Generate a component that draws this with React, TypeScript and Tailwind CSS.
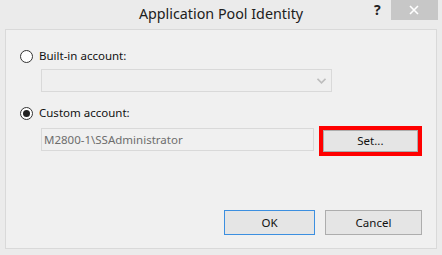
import React from "react";

function Radio({ checked }: { checked?: boolean }) {
  return (
    <div className="w-[13px] h-[13px] rounded-full border border-[#333333] bg-white flex items-center justify-center">
      {checked && <div className="w-[7px] h-[7px] rounded-full bg-[#222222]" />}
    </div>
  );
}

export default function App() {
  return (
    <div
      className="w-[442px] h-[255px] bg-[#ebebeb] flex flex-col text-[11.5px] text-[#111111]"
      style={{ fontFamily: '"Segoe UI", "Noto Sans", "Open Sans", sans-serif' }}
    >
      {/* Title bar */}
      <div className="h-[29px] flex items-start shrink-0">
        <div className="w-[72px]" />
        <div className="flex-1 flex justify-center pt-[4px]">
          <span className="text-[14.3px] leading-[20px] text-[#202020]">Application Pool Identity</span>
        </div>
        <div className="w-[72px] flex items-start">
          <span className="ml-[4px] mt-[1px] text-[14px] font-bold leading-[18px] text-[#222222]">?</span>
          <div className="ml-[10px] w-[47px] h-[20px] bg-[#c7c7c7] flex items-center justify-center">
            <svg width="10" height="10" viewBox="0 0 10 10">
              <path d="M1 1 L9 9 M9 1 L1 9" stroke="#ffffff" strokeWidth="1.6" />
            </svg>
          </div>
        </div>
      </div>

      {/* Panel */}
      <div className="flex-1 mx-[5px] mb-[6px] border border-[#d9d9d9] bg-[#f0f0f0] flex flex-col pl-[14px] pr-[14px] pb-[13px]">
        <div className="h-[16px] mt-[18px] flex items-center gap-[6px]">
          <Radio />
          <span className="leading-[16px]">Built-in account:</span>
        </div>
        <div className="mt-[5px] ml-[21px] w-[291px] h-[23px] border border-[#d9d9d9] bg-[#efefef] flex items-center justify-end pr-[5px]">
          <svg width="9" height="6" viewBox="0 0 9 6">
            <path d="M0.5 0.8 L4.5 4.8 L8.5 0.8" stroke="#bdbdbd" strokeWidth="1.6" fill="none" />
          </svg>
        </div>
        <div className="h-[16px] mt-[13px] flex items-center gap-[6px]">
          <Radio checked />
          <span className="leading-[16px]">Custom account:</span>
        </div>
        <div className="mt-[5px] flex items-start">
          <div className="mt-[2px] ml-[21px] w-[275px] h-[23px] border border-[#d9d9d9] bg-[#f0f0f0] flex items-center pl-[2px] text-[#6d6d6d]">
            M2800-1\SSAdministrator
          </div>
          <div className="ml-[5px] w-[104px] h-[30px] border-[4px] border-[#ff0000] flex">
            <div className="flex-1 border border-[#adadad] bg-[#e5e5e5] flex items-center justify-center">
              Set...
            </div>
          </div>
        </div>
        <div className="flex-1" />
        <div className="flex justify-end gap-[10px]">
          <div className="w-[91px] h-[25px] border border-[#3c8fe0] bg-[#e5e5e5] flex items-center justify-center">
            OK
          </div>
          <div className="w-[97px] h-[25px] border border-[#adadad] bg-[#e5e5e5] flex items-center justify-center">
            Cancel
          </div>
        </div>
      </div>
    </div>
  );
}
